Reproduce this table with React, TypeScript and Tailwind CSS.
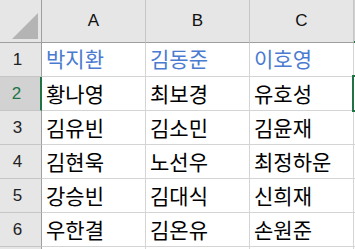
import React from "react";

const rows = [
  ["박지환", "김동준", "이호영"],
  ["황나영", "최보경", "유호성"],
  ["김유빈", "김소민", "김윤재"],
  ["김현욱", "노선우", "최정하운"],
  ["강승빈", "김대식", "신희재"],
  ["우한결", "김온유", "손원준"],
  ["", "", ""],
];

const cols = ["A", "B", "C"];

const App = () => {
  return (
    <div className="relative w-[355px] h-[249px] overflow-hidden bg-white">
      {/* header row */}
      <div className="flex h-[43px]">
        <div className="relative w-[42px] shrink-0 bg-[#e6e6e6] border-r border-b border-[#9f9f9f]">
          <div
            className="absolute left-[12px] top-[13px] w-[26px] h-[26px] bg-[#b4b4b4]"
            style={{ clipPath: "polygon(100% 0, 100% 100%, 0 100%)" }}
          />
        </div>
        {cols.map((c) => (
          <div
            key={c}
            className="w-[104px] shrink-0 flex items-center justify-center bg-[#e6e6e6] border-r border-[#c6c6c6] border-b border-b-[#9f9f9f] text-[17px] text-[#111] font-['Liberation_Sans',sans-serif]"
          >
            {c}
          </div>
        ))}
        <div className="flex-1 bg-[#d2d2d2] border-b-2 border-[#217346]" />
      </div>

      {rows.map((r, i) => {
        const selected = i === 1;
        const last = i === rows.length - 1;
        return (
          <div key={i} className="flex h-[34px]">
            <div
              className={
                selected
                  ? "w-[42px] shrink-0 flex items-center justify-center pr-[7px] bg-[#d2d2d2] border-r-2 border-r-[#217346] border-b border-b-[#c6c6c6] text-[17px] text-[#217346] font-['Liberation_Sans',sans-serif]"
                  : "w-[42px] shrink-0 flex items-center justify-center pr-[6px] bg-[#e6e6e6] border-r border-r-[#9f9f9f] border-b border-b-[#c6c6c6] text-[17px] text-[#222] font-['Liberation_Sans',sans-serif]"
              }
            >
              {last ? "" : i + 1}
            </div>
            {r.map((v, j) => (
              <div
                key={j}
                className={
                  i === 0
                    ? "w-[104px] shrink-0 flex items-center pl-[4px] pb-[3px] border-r border-b border-[#d4d4d4] text-[21px] leading-none text-[#4a7bd0] font-['Noto_Sans_CJK_KR',sans-serif]"
                    : "w-[104px] shrink-0 flex items-center pl-[4px] border-r border-b border-[#d4d4d4] text-[21px] leading-none text-black font-['Noto_Sans_CJK_KR',sans-serif]"
                }
              >
                {v}
              </div>
            ))}
            <div className="flex-1 border-b border-[#d4d4d4]" />
          </div>
        );
      })}

      {/* active cell D2 */}
      <div className="absolute left-[352px] top-[75px] w-[12px] h-[37px] border-2 border-[#217346]" />
    </div>
  );
};

export default App;
